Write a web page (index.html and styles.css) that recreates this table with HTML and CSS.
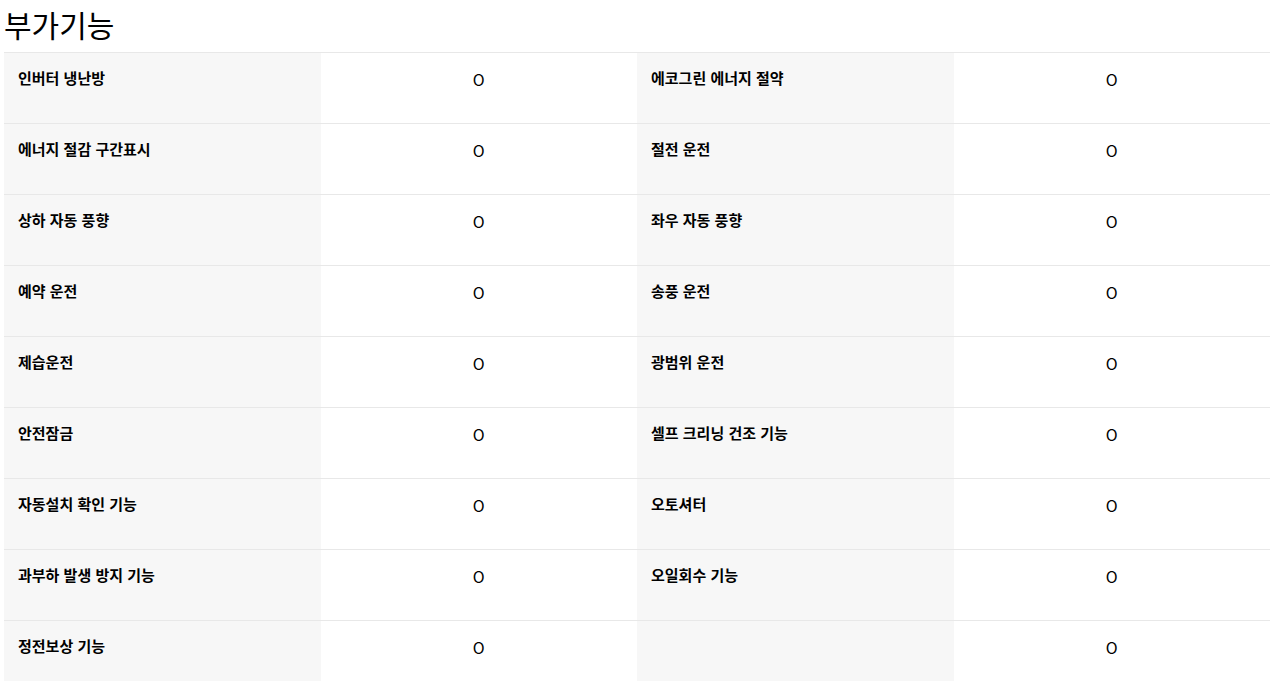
FILE: index.html
```html
<!DOCTYPE html>
<html lang="ko">
<head>
<meta charset="utf-8">
<title>부가기능</title>
<link rel="stylesheet" href="styles.css">
</head>
<body>
<section class="spec">
  <h2 class="spec-title">부가기능</h2>
  <div class="spec-grid">
    <div class="cell label">인버터 냉난방</div><div class="cell value">O</div>
    <div class="cell label">에코그린 에너지 절약</div><div class="cell value">O</div>
    <div class="cell label">에너지 절감 구간표시</div><div class="cell value">O</div>
    <div class="cell label">절전 운전</div><div class="cell value">O</div>
    <div class="cell label">상하 자동 풍향</div><div class="cell value">O</div>
    <div class="cell label">좌우 자동 풍향</div><div class="cell value">O</div>
    <div class="cell label">예약 운전</div><div class="cell value">O</div>
    <div class="cell label">송풍 운전</div><div class="cell value">O</div>
    <div class="cell label">제습운전</div><div class="cell value">O</div>
    <div class="cell label">광범위 운전</div><div class="cell value">O</div>
    <div class="cell label">안전잠금</div><div class="cell value">O</div>
    <div class="cell label">셀프 크리닝 건조 기능</div><div class="cell value">O</div>
    <div class="cell label">자동설치 확인 기능</div><div class="cell value">O</div>
    <div class="cell label">오토셔터</div><div class="cell value">O</div>
    <div class="cell label">과부하 발생 방지 기능</div><div class="cell value">O</div>
    <div class="cell label">오일회수 기능</div><div class="cell value">O</div>
    <div class="cell label">정전보상 기능</div><div class="cell value">O</div>
    <div class="cell label"></div><div class="cell value">O</div>
  </div>
</section>
</body>
</html>
```

FILE: styles.css
```css
html, body {
  margin: 0;
  padding: 0;
  background: #ffffff;
}

body {
  font-family: "Noto Sans CJK KR", "Noto Sans", sans-serif;
  color: #111111;
}

.spec {
  padding: 0 3px 0 4px;
}

.spec-title {
  margin: 0;
  padding: 4px 0 8px 0;
  font-size: 30px;
  line-height: 40px;
  font-weight: 400;
  color: #000000;
}

.spec-grid {
  display: grid;
  grid-template-columns: repeat(4, 1fr);
  border-top: 1px solid #e8e8e8;
}

.cell {
  border-bottom: 1px solid #e8e8e8;
  box-sizing: content-box;
  line-height: 20px;
}

.label {
  background: #f7f7f7;
  padding: 15px 0 0 14px;
  height: 55px;
  font-size: 15px;
  font-weight: 700;
  color: #000000;
}

.value {
  background: #ffffff;
  text-align: center;
  font-size: 16px;
  font-weight: 400;
  color: #000000;
  padding-top: 16px;
  height: 54px;
}
```
